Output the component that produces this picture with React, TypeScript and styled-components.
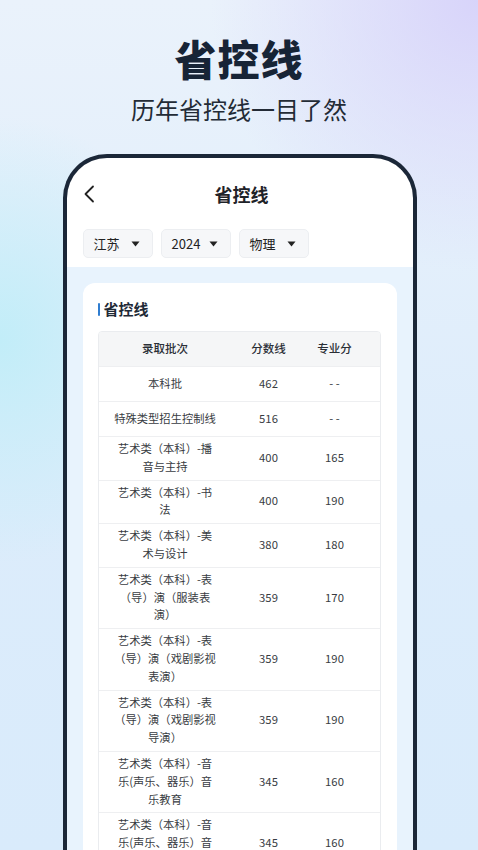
import React, { FunctionComponent } from 'react';
import styled, { createGlobalStyle } from 'styled-components';

const GlobalStyle = createGlobalStyle`
	html, body { margin: 0; padding: 0; }
	body { font-family: "Noto Sans CJK SC", "Noto Sans", sans-serif; }
`;

const Page = styled.div`
	width: 478px;
	height: 850px;
	overflow: hidden;
	display: flex;
	flex-direction: column;
	align-items: center;
	background:
		radial-gradient(ellipse 55% 35% at 0% 40%, rgba(192, 237, 248, 0.95), rgba(192, 237, 248, 0) 75%),
		radial-gradient(ellipse 70% 40% at 100% 0%, rgba(216, 212, 250, 1), rgba(216, 212, 250, 0) 80%),
		linear-gradient(180deg, #eaf2fb 0%, #dcecfb 60%, #d9ebfb 100%);
`;

const HeroTitle = styled.h1`
	margin: 31px 0 0;
	font-size: 42px;
	line-height: 54px;
	font-weight: 900;
	color: #172436;
	letter-spacing: 1px;
`;

const HeroSub = styled.p`
	margin: 7px 0 0;
	font-size: 24px;
	line-height: 34px;
	font-weight: 400;
	color: #232b36;
`;

const Phone = styled.div`
	margin-top: 28px;
	margin-left: 1px;
	width: 346px;
	flex: 1;
	display: flex;
	flex-direction: column;
	background: #fff;
	border: 4px solid #1b2738;
	border-bottom: none;
	border-radius: 44px 44px 0 0;
	overflow: hidden;
`;

const NavBar = styled.div`
	flex-shrink: 0;
	height: 71px;
	display: grid;
	grid-template-columns: 40px 1fr 40px;
	align-items: center;
	padding: 0 12px 0 16px;
`;

const NavTitle = styled.div`
	text-align: center;
	font-size: 18px;
	font-weight: 600;
	color: #1f2329;
`;

const Filters = styled.div`
	flex-shrink: 0;
	display: flex;
	gap: 8px;
	padding: 0 16px 9px;
`;

const Chip = styled.div`
	width: 70px;
	height: 29px;
	box-sizing: border-box;
	display: flex;
	align-items: center;
	justify-content: space-between;
	padding: 0 12px 0 10px;
	background: #f6f7f9;
	border: 1px solid #eceef1;
	border-radius: 5px;
	font-size: 13px;
	color: #222;
`;

const Band = styled.div`
	flex: 1 0 auto;
	background: #e8f3fd;
	padding: 16px 16px 0;
`;

const Card = styled.div`
	background: #fff;
	border-radius: 12px 12px 0 0;
	padding: 17px 16px 0 15px;
	min-height: 600px;
`;

const CardTitle = styled.div`
	display: flex;
	align-items: center;
	gap: 4px;
	font-size: 15px;
	line-height: 18px;
	font-weight: 600;
	color: #1f2a37;
	margin-bottom: 13px;

	&::before {
		content: '';
		width: 2px;
		height: 13px;
		background: #2f7dd0;
		border-radius: 1px;
	}
`;

const Table = styled.div`
	border: 1px solid #eaecef;
	border-radius: 4px;
	overflow: hidden;
`;

const Row = styled.div<{ $head?: boolean }>`
	display: grid;
	grid-template-columns: 133px 74px 58px 1fr;
	min-height: 34px;
	border-bottom: 1px solid #eeeff1;
	background: ${(p) => (p.$head ? '#f5f6f7' : '#fff')};
	font-size: ${(p) => (p.$head ? '11.5px' : '11.3px')};
	font-weight: ${(p) => (p.$head ? 500 : 400)};
	color: ${(p) => (p.$head ? '#2b2f36' : '#383c42')};
`;

const Cell = styled.div<{ $wide?: boolean }>`
	display: flex;
	align-items: center;
	justify-content: center;
	text-align: center;
	line-height: 17.8px;
	padding: 3px ${(p) => (p.$wide ? '15px' : '0')} 4px;
`;

const Caret = () => (
	<svg width="9" height="6" viewBox="0 0 9 6">
		<path d="M0.5 0.5 L8.5 0.5 L4.5 5.5 Z" fill="#222" />
	</svg>
);

const BackIcon = () => (
	<svg width="12" height="18" viewBox="0 0 12 18">
		<polyline points="10,1.5 2.5,9 10,16.5" fill="none" stroke="#222" strokeWidth="1.8" strokeLinecap="round" strokeLinejoin="round" />
	</svg>
);

const rows: [string, string, string][] = [
	['本科批', '462', '- -'],
	['特殊类型招生控制线', '516', '- -'],
	['艺术类（本科）-播音与主持', '400', '165'],
	['艺术类（本科）-书法', '400', '190'],
	['艺术类（本科）-美术与设计', '380', '180'],
	['艺术类（本科）-表（导）演（服装表演）', '359', '170'],
	['艺术类（本科）-表（导）演（戏剧影视表演）', '359', '190'],
	['艺术类（本科）-表（导）演（戏剧影视导演）', '359', '190'],
	['艺术类（本科）-音乐(声乐、器乐）音乐教育', '345', '160'],
	['艺术类（本科）-音乐(声乐、器乐）音乐表演', '345', '160'],
];

const filters = ['江苏', '2024', '物理'];

const App: FunctionComponent = () => {
	return (
		<Page>
			<GlobalStyle />
			<HeroTitle>省控线</HeroTitle>
			<HeroSub>历年省控线一目了然</HeroSub>
			<Phone>
				<NavBar>
					<BackIcon />
					<NavTitle>省控线</NavTitle>
					<div />
				</NavBar>
				<Filters>
					{filters.map((f) => (
						<Chip key={f}>
							<span>{f}</span>
							<Caret />
						</Chip>
					))}
				</Filters>
				<Band>
					<Card>
						<CardTitle>省控线</CardTitle>
						<Table>
							<Row $head>
								<Cell $wide>录取批次</Cell>
								<Cell>分数线</Cell>
								<Cell>专业分</Cell>
								<div />
							</Row>
							{rows.map(([name, score, major], i) => (
								<Row key={i}>
									<Cell $wide>{name}</Cell>
									<Cell>{score}</Cell>
									<Cell>{major}</Cell>
									<div />
								</Row>
							))}
						</Table>
					</Card>
				</Band>
			</Phone>
		</Page>
	);
};

export default App;
